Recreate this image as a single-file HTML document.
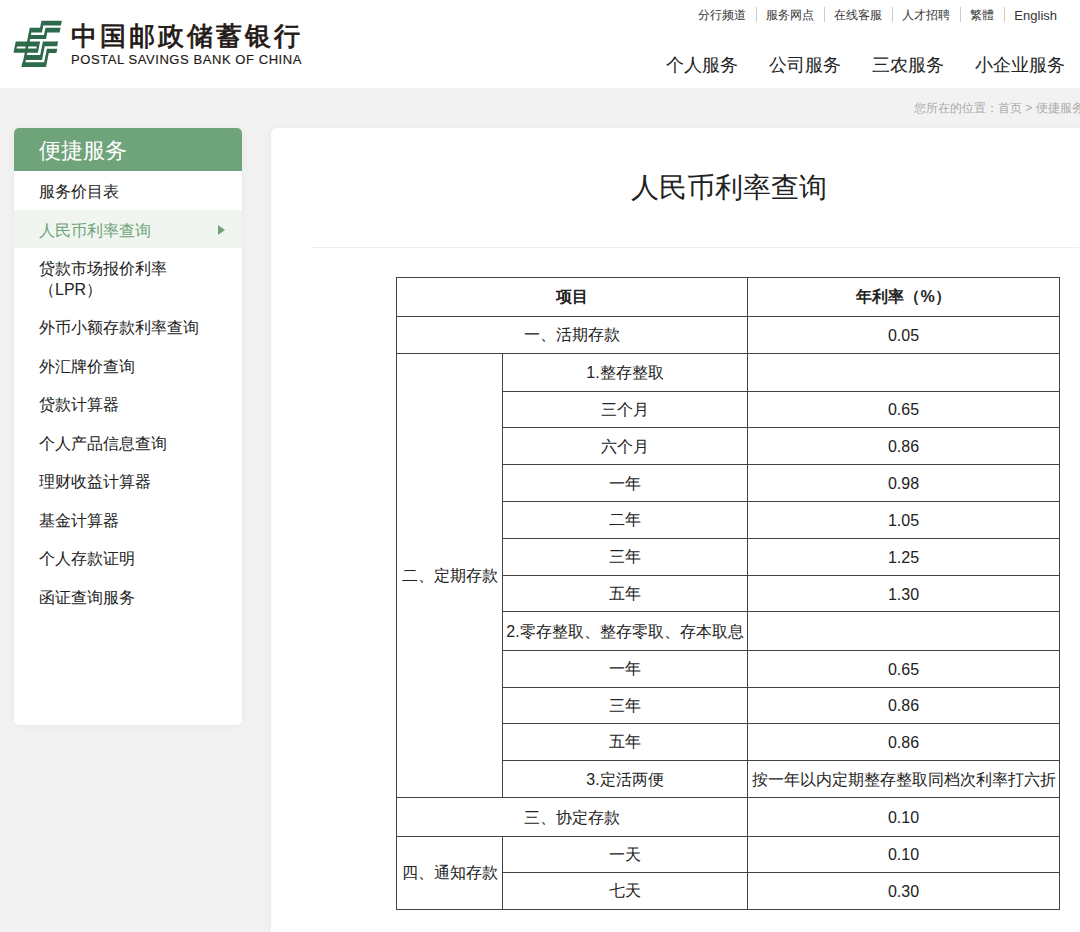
<!DOCTYPE html>
<html><head><meta charset="utf-8">
<style>
*{margin:0;padding:0;box-sizing:border-box}
html,body{width:1080px;height:932px;overflow:hidden;background:#f2f2f2;font-family:"Liberation Sans",sans-serif;color:#222}
#hdr{position:absolute;left:0;top:0;width:1080px;height:88px;background:#fff}
#logo{position:absolute;left:0;top:0;width:70px;height:80px}
#cn{position:absolute;left:71px;top:19px;font-size:26px;font-weight:400;-webkit-text-stroke:0.8px #231815;color:#231815;letter-spacing:3px;white-space:nowrap;line-height:34px}
#en{position:absolute;left:71px;top:52px;font-size:13px;color:#231815;-webkit-text-stroke:0.15px #231815;letter-spacing:0.57px;white-space:nowrap;line-height:16px}
#toplinks{position:absolute;right:13px;top:7px;font-size:12px;color:#333;white-space:nowrap}
#toplinks span{display:inline-block;padding:2px 10px 0 9px;border-left:1px solid #ccc;line-height:13px;vertical-align:top}
#toplinks span.e{font-size:13px}
#toplinks span:first-child{border-left:none}
#nav{position:absolute;right:15px;top:53px;font-size:18px;color:#222;white-space:nowrap}
#nav span{margin-left:31px}
#crumb{position:absolute;left:914px;top:100px;font-size:12px;color:#aaa;white-space:nowrap}
#side{position:absolute;left:14px;top:128px;width:228px;height:597px;background:#fff;border-radius:5px;overflow:hidden;box-shadow:0 0 10px rgba(0,0,0,0.05)}
#side .h{height:43px;background:#6fa37a;color:#fff;font-size:22px;padding-left:25px;line-height:46px}
#side .it{position:relative;font-size:16px;padding:11px 0 7px 25px;color:#222;line-height:20.5px}
#side .it.on{background:#f0f5ef;color:#6ea37a}
#side .it.on:after{content:"";position:absolute;left:204px;top:15px;border-left:7px solid #6ea37a;border-top:5px solid transparent;border-bottom:5px solid transparent}
#main{position:absolute;left:271px;top:128px;width:915px;height:830px;background:#fff;border-radius:6px;box-shadow:0 0 10px rgba(0,0,0,0.05)}
#title{position:absolute;left:271px;width:915px;top:170px;text-align:center;font-size:28px;color:#222;line-height:36px}
#divider{position:absolute;left:311px;top:247px;width:768px;height:1px;background:#eee}
table{position:absolute;left:396px;top:277px;border-collapse:collapse;font-size:16px;color:#222}
td{border:1px solid #444;text-align:center;padding:2px 0 0 0}
</style></head><body>
<div id="hdr">
  <svg id="logo" viewBox="0 0 70 80" width="70" height="80"><path fill="#2c6a4b" d="M41.44 20.8 61.84 20.8 60.9 25.5 40.5 25.5ZM40.5 25.5 43.3 25.5 42.86 27.7 40.06 27.7ZM29.76 27.7 42.86 27.7 41.9 32.5 28.8 32.5ZM45.46 27.7 60.56 27.7 59.6 32.5 44.5 32.5ZM44.5 32.5 47.3 32.5 46.82 34.9 44.02 34.9ZM28.32 34.9 46.82 34.9 46.02 38.9 27.52 38.9ZM28.8 32.5 31.4 32.5 30.92 34.9 28.32 34.9ZM27.52 38.9 30.12 38.9 29.62 41.4 27.02 41.4ZM15.72 41.4 40.12 41.4 37.86 52.7 13.46 52.7ZM42.92 41.4 58.12 41.4 57.14 46.3 41.94 46.3ZM41.94 46.3 44.74 46.3 43.0 55.0 40.2 55.0ZM24.76 52.7 27.36 52.7 26.9 55.0 24.3 55.0ZM24.3 55.0 43.0 55.0 42.0 60.0 23.3 60.0ZM46.86 48.7 57.26 48.7 56.42 52.9 46.02 52.9ZM46.02 52.9 48.82 52.9 46.94 62.3 44.14 62.3ZM23.3 60.0 25.9 60.0 25.44 62.3 22.84 62.3ZM22.34 62.3 46.94 62.3 46.02 66.9 21.42 66.9Z"/><path fill="#fff" d="M16.98 46.6 25.68 46.6 25.28 48.6 16.58 48.6ZM28.38 46.6 36.78 46.6 36.38 48.6 27.98 48.6Z"/></svg>
  <div id="cn">中国邮政储蓄银行</div>
  <div id="en">POSTAL SAVINGS BANK OF CHINA</div>
  <div id="toplinks"><span>分行频道</span><span>服务网点</span><span>在线客服</span><span>人才招聘</span><span>繁體</span><span class="e">English</span></div>
  <div id="nav"><span>个人服务</span><span>公司服务</span><span>三农服务</span><span>小企业服务</span></div>
</div>
<div id="crumb">您所在的位置：首页 &gt; 便捷服务</div>
<div id="side">
  <div class="h">便捷服务</div>
  <div class="it">服务价目表</div>
  <div class="it on">人民币利率查询</div>
  <div class="it">贷款市场报价利率<br>（LPR）</div>
  <div class="it">外币小额存款利率查询</div>
  <div class="it">外汇牌价查询</div>
  <div class="it">贷款计算器</div>
  <div class="it">个人产品信息查询</div>
  <div class="it">理财收益计算器</div>
  <div class="it">基金计算器</div>
  <div class="it">个人存款证明</div>
  <div class="it">函证查询服务</div>
</div>
<div id="main"></div>
<div id="title">人民币利率查询</div>
<div id="divider"></div>
<table>
<colgroup><col style="width:106px"><col style="width:245px"><col style="width:312px"></colgroup>
<tr style="height:38.5px"><td colspan="2" style="font-weight:bold">项目</td><td style="font-weight:bold">年利率（%）</td></tr>
<tr style="height:37px"><td colspan="2">一、活期存款</td><td>0.05</td></tr>
<tr style="height:38.2px"><td rowspan="12">二、定期存款</td><td>1.整存整取</td><td></td></tr>
<tr style="height:36.5px"><td>三个月</td><td>0.65</td></tr>
<tr style="height:37.3px"><td>六个月</td><td>0.86</td></tr>
<tr style="height:36.3px"><td>一年</td><td>0.98</td></tr>
<tr style="height:37.1px"><td>二年</td><td>1.05</td></tr>
<tr style="height:37.1px"><td>三年</td><td>1.25</td></tr>
<tr style="height:36.3px"><td>五年</td><td>1.30</td></tr>
<tr style="height:38.7px"><td>2.零存整取、整存零取、存本取息</td><td></td></tr>
<tr style="height:36.7px"><td>一年</td><td>0.65</td></tr>
<tr style="height:36.2px"><td>三年</td><td>0.86</td></tr>
<tr style="height:37.1px"><td>五年</td><td>0.86</td></tr>
<tr style="height:37.4px"><td>3.定活两便</td><td>按一年以内定期整存整取同档次利率打六折</td></tr>
<tr style="height:38.6px"><td colspan="2">三、协定存款</td><td>0.10</td></tr>
<tr style="height:36.0px"><td rowspan="2">四、通知存款</td><td>一天</td><td>0.10</td></tr>
<tr style="height:37.0px"><td>七天</td><td>0.30</td></tr>
</table>
</body></html>
